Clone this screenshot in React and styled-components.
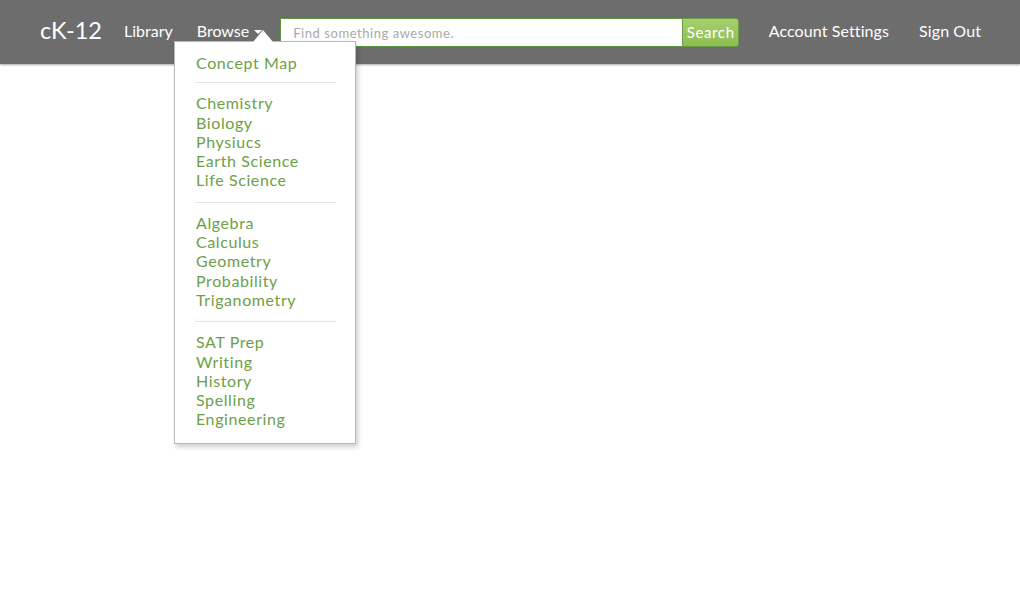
import React from "react";
import styled, { createGlobalStyle } from "styled-components";

const Global = createGlobalStyle`
  html, body { margin: 0; padding: 0; background: #ffffff; }
  body { font-family: Lato, "Open Sans", "Liberation Sans", sans-serif; }
  * { box-sizing: border-box; }
`;

const Page = styled.div`
  width: 1020px;
  height: 600px;
  background: #ffffff;
  position: relative;
`;

const Header = styled.header`
  height: 64px;
  background: #6d6d6d;
  box-shadow: 0 1px 2px rgba(0, 0, 0, 0.35);
  display: flex;
  align-items: center;
  padding: 0 39px 3px 40px;
  color: #ffffff;
  position: relative;
`;

const Logo = styled.div`
  font-size: 23.5px;
  letter-spacing: 0;
  margin-right: 22px;
  line-height: 1;
  white-space: nowrap;
  flex-shrink: 0;
`;

const NavLink = styled.a`
  color: #ffffff;
  font-size: 16px;
  letter-spacing: ${(p) => (p.$wide ? "0.1px" : "0")};
  text-decoration: none;
  margin-right: ${(p) => p.$gap || 0}px;
  white-space: nowrap;
  display: flex;
  align-items: center;
  flex-shrink: 0;
  position: relative;
`;

const Caret = styled.span`
  width: 0;
  height: 0;
  border-left: 4px solid transparent;
  border-right: 4px solid transparent;
  border-top: 4px solid #ffffff;
  margin-left: 5px;
  margin-top: 2px;
`;

const SearchForm = styled.form`
  display: flex;
  height: 29px;
  margin: 3px 29px 0 0;
  flex-shrink: 0;
`;

const SearchInput = styled.input`
  width: 402px;
  flex-shrink: 0;
  height: 29px;
  border: 1px solid #5f9440;
  border-right: none;
  background: #ffffff;
  font-family: inherit;
  font-size: 13px;
  letter-spacing: 0.55px;
  padding: 2px 12px 0;
  color: #333;
  outline: none;
  &::placeholder { color: #a8a8a8; }
`;

const SearchButton = styled.button`
  width: 57px;
  flex-shrink: 0;
  height: 29px;
  border: 1px solid #6b9e44;
  border-radius: 0 3px 3px 0;
  background: linear-gradient(#a6d06e, #8dbd54);
  color: #ffffff;
  font-family: inherit;
  font-size: 15px;
  letter-spacing: 0.6px;
  padding: 0;
  cursor: pointer;
`;

const Spacer = styled.div`
  flex: 1;
`;

const Menu = styled.div`
  position: absolute;
  top: 41px;
  left: 174px;
  width: 182px;
  height: 403px;
  background: #ffffff;
  border: 1px solid #b9b9b9;
  box-shadow: 2px 3px 5px rgba(0, 0, 0, 0.2);
  padding: 11px 0 0;
  z-index: 5;
  &::before {
    content: "";
    position: absolute;
    top: -12px;
    left: 78px;
    border-left: 10px solid transparent;
    border-right: 10px solid transparent;
    border-bottom: 12px solid #ffffff;
  }
`;

const Section = styled.ul`
  list-style: none;
  margin: 0;
  padding: ${(p) => (p.$first ? "0 0 10px" : "10px 0 12px")};
`;

const Item = styled.li`
  padding-left: 21px;
  font-size: 16px;
  letter-spacing: 0.6px;
  line-height: 19.3px;
  color: #6da046;
  white-space: nowrap;
`;

const Divider = styled.hr`
  margin: 0 19px 0 20px;
  border: none;
  border-top: 1px solid #e3e3e3;
  height: 0;
`;

const sections = [
  ["Concept Map"],
  ["Chemistry", "Biology", "Physiucs", "Earth Science", "Life Science"],
  ["Algebra", "Calculus", "Geometry", "Probability", "Triganometry"],
  ["SAT Prep", "Writing", "History", "Spelling", "Engineering"],
];

export default function App() {
  return (
    <Page>
      <Global />
      <Header>
        <Logo>cK-12</Logo>
        <NavLink $gap={24}>Library</NavLink>
        <NavLink $gap={18}>
          Browse
          <Caret />
        </NavLink>
        <SearchForm onSubmit={(e) => e.preventDefault()}>
          <SearchInput placeholder="Find something awesome." />
          <SearchButton type="submit">Search</SearchButton>
        </SearchForm>
        <Spacer />
        <NavLink $gap={30} $wide>Account Settings</NavLink>
        <NavLink $wide>Sign Out</NavLink>
      </Header>
      <Menu>
        {sections.map((items, i) => (
          <React.Fragment key={i}>
            {i > 0 && <Divider />}
            <Section $first={i === 0}>
              {items.map((t) => (
                <Item key={t}>{t}</Item>
              ))}
            </Section>
          </React.Fragment>
        ))}
      </Menu>
    </Page>
  );
}
